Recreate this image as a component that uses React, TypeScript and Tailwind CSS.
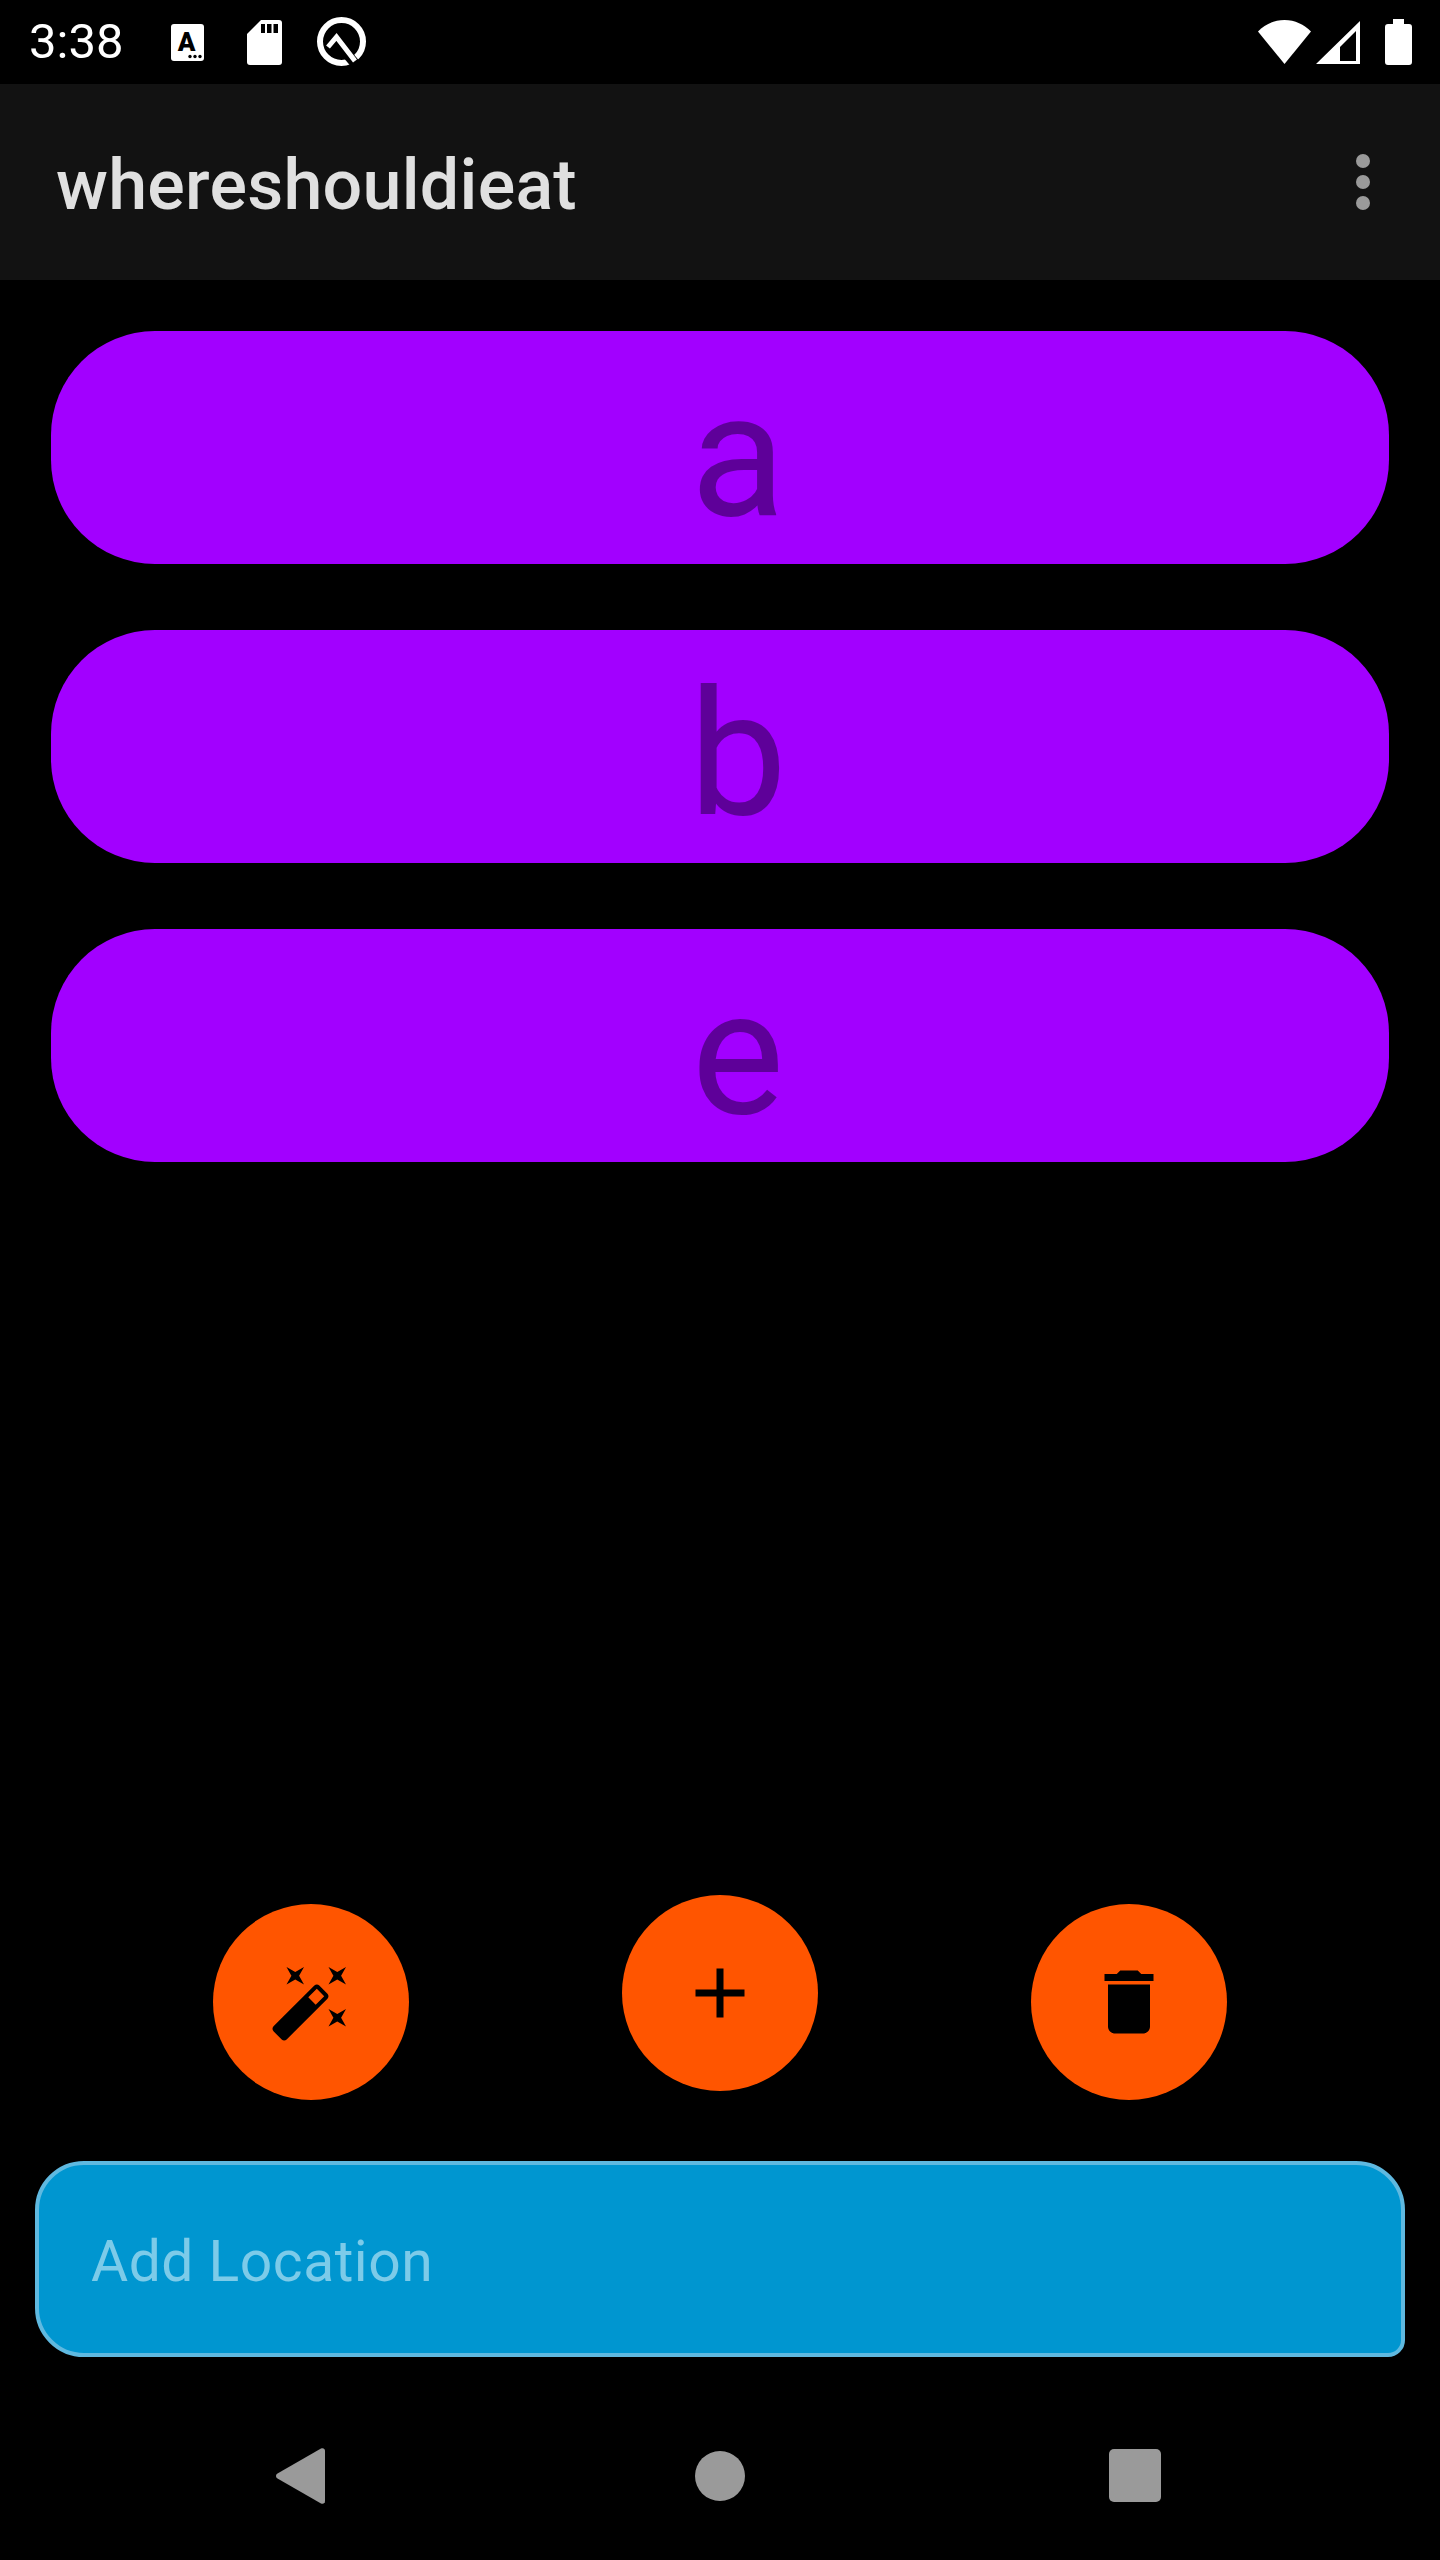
import React from 'react';

const roboto = { fontFamily: 'Roboto, sans-serif' };

function AccessIcon() {
  return (
    <svg width="33" height="37" viewBox="0 0 33 37" className="ml-[50px]">
      <rect width="33" height="37" rx="3" fill="#fff" />
      <text x="15.500" y="27" textAnchor="middle" fontSize="26" fontWeight="900" fontFamily="Roboto, sans-serif" fill="#000">A</text>
      <circle cx="19" cy="32.500" r="1.700" fill="#000" />
      <circle cx="24" cy="32.500" r="1.700" fill="#000" />
      <circle cx="29" cy="32.500" r="1.700" fill="#000" />
    </svg>
  );
}

function SdIcon() {
  return (
    <svg width="35" height="45" viewBox="0 0 35 45" className="ml-[43px]">
      <path d="M14 0h18a3 3 0 0 1 3 3v39a3 3 0 0 1-3 3H3a3 3 0 0 1-3-3V14z" fill="#fff" />
      <path d="M14 4h4v9h-4zM20 4h4.500v9H20zM26.500 4H31v9h-4.500z" fill="#000" />
    </svg>
  );
}

function QIcon() {
  return (
    <svg width="50" height="50" viewBox="0 0 50 50" className="ml-[35px]">
      <circle cx="24.500" cy="24.500" r="21.500" fill="none" stroke="#fff" strokeWidth="6" />
      <path d="M30 37L40 49" fill="none" stroke="#000" strokeWidth="10" />
      <path d="M11 30L19.500 20L38 44" fill="none" stroke="#fff" strokeWidth="5" />
    </svg>
  );
}

function Fab({ path, className }: { path: string; className: string }) {
  return (
    <button className={`flex h-[196px] w-[196px] items-center justify-center rounded-full bg-[#ff5500] ${className}`}>
      <svg width="84" height="84" viewBox="0 0 24 24" fill="#000">
        <path d={path} />
      </svg>
    </button>
  );
}

function Pill({ label }: { label: string }) {
  return (
    <div className="flex h-[233px] items-center justify-center rounded-[104px] bg-[#a200ff] pl-[36px] pt-[16px]">
      <span className="text-[175px] leading-[217px] text-[#5e0099]" style={roboto}>{label}</span>
    </div>
  );
}

export default function App() {
  return (
    <div className="flex h-[2560px] w-[1440px] flex-col overflow-hidden bg-black" style={roboto}>
      {/* Status bar */}
      <div className="flex h-[84px] items-center pl-[29px] pr-[28px]">
        <span className="w-[92px] text-[49px] leading-[84px] text-white">3:38</span>
        <AccessIcon />
        <SdIcon />
        <QIcon />
        <div className="ml-auto flex items-center">
          <svg width="53" height="44" viewBox="0 0 53 44">
            <path d="M0 11.500C7 4.500 16 0 26.500 0S46 4.500 53 11.500L26.500 44z" fill="#fff" />
          </svg>
          <svg width="44" height="43" viewBox="0 0 44 43" className="ml-[5px]">
            <path fillRule="evenodd" d="M44 0v43H0zM40 10L24 26v14h16z" fill="#fff" />
          </svg>
          <svg width="27" height="46" viewBox="0 0 27 46" className="ml-[25px]">
            <path d="M8 0h11v5h5a3 3 0 0 1 3 3v35a3 3 0 0 1-3 3H3a3 3 0 0 1-3-3V8a3 3 0 0 1 3-3h5z" fill="#fff" />
          </svg>
        </div>
      </div>

      {/* App bar */}
      <div className="flex h-[196px] items-center justify-between bg-[#121212] pl-[56px] pr-[70px]">
        <span className="pt-[6px] text-[70px] font-medium tracking-[0.25px] text-[#e0e0e0]">whereshouldieat</span>
        <div className="flex flex-col gap-[7px]">
          <div className="h-[14px] w-[14px] rounded-full bg-[#9a9a9a]" />
          <div className="h-[14px] w-[14px] rounded-full bg-[#9a9a9a]" />
          <div className="h-[14px] w-[14px] rounded-full bg-[#9a9a9a]" />
        </div>
      </div>

      {/* Location list */}
      <div className="flex flex-1 flex-col gap-[66px] px-[51px] pt-[51px]">
        <Pill label="a" />
        <Pill label="b" />
        <Pill label="e" />
      </div>

      {/* Actions */}
      <div className="flex items-start pl-[213px]">
        <Fab className="mt-[9px]" path="M7.500 5.600L10 7 8.600 4.500 10 2 7.500 3.400 5 2l1.400 2.500L5 7zm12 9.800L17 14l1.400 2.500L17 19l2.500-1.400L22 19l-1.400-2.500L22 14zM22 2l-2.500 1.400L17 2l1.400 2.500L17 7l2.500-1.400L22 7l-1.400-2.500zm-7.630 5.290c-.39-.39-1.020-.39-1.410 0L1.290 18.960c-.39.39-.39 1.020 0 1.410l2.340 2.340c.39.39 1.020.39 1.410 0L16.700 11.050c.39-.39.39-1.020 0-1.410l-2.330-2.350zm-1.030 5.490l-2.120-2.120 2.440-2.440 2.120 2.120-2.440 2.440z" />
        <Fab className="ml-[213px]" path="M19 13h-6v6h-2v-6H5v-2h6V5h2v6h6v2z" />
        <Fab className="ml-[213px] mt-[9px]" path="M6 19c0 1.100.9 2 2 2h8c1.100 0 2-.9 2-2V7H6v12zM19 4h-3.500l-1-1h-5l-1 1H5v2h14V4z" />
      </div>

      {/* Add location input */}
      <div className="mx-[35px] mt-[61px] flex h-[196px] items-center rounded-[49px] rounded-br-[17px] border-4 border-[#5fb9e0] bg-[#0096d0] pl-[52px] pt-[6px]">
        <input
          readOnly
          placeholder="Add Location"
          className="w-full bg-transparent text-[57px] tracking-[0.5px] outline-none placeholder:text-[#7ccbe9]"
        />
      </div>

      {/* Nav bar */}
      <div className="flex h-[203px] items-center pl-[276px] pt-[34px]">
        <svg width="49" height="56" viewBox="0 0 49 56">
          <path d="M1.500 25.500L45 .6c2-1 4 0 4 2.400v50c0 2.400-2 3.400-4 2.400L1.500 30.500c-2-1.200-2-3.800 0-5z" fill="#9a9a9a" />
        </svg>
        <div className="ml-[370px] h-[50px] w-[50px] rounded-full bg-[#9a9a9a]" />
        <div className="ml-[364px] h-[53px] w-[52px] rounded-[5px] bg-[#9a9a9a]" />
      </div>
    </div>
  );
}
